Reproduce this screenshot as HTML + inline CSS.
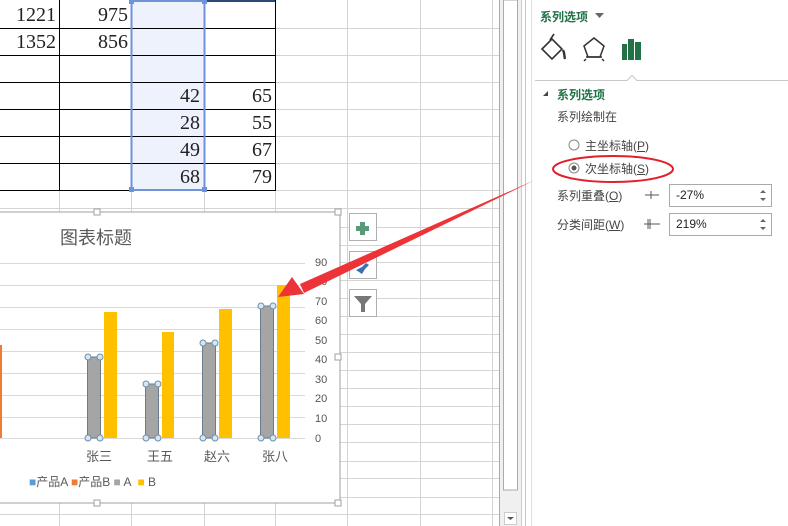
<!DOCTYPE html>
<html><head><meta charset="utf-8"><style>
*{margin:0;padding:0;box-sizing:border-box}
body{width:788px;height:526px;overflow:hidden;background:#fff;position:relative;font-family:"Liberation Sans","Noto Sans CJK SC",sans-serif}
.a{position:absolute}
.num{position:absolute;font-family:"Liberation Serif",serif;font-size:20px;color:#222;text-align:right}
.t{position:absolute;font-size:12px;color:#444;white-space:nowrap}
</style></head><body>
<svg class="a" style="left:0;top:0" width="788" height="526">
 <g stroke="#d4d4d4" stroke-width="1">
  <line x1="275.5" y1="0" x2="275.5" y2="526"/><line x1="347.5" y1="0" x2="347.5" y2="526"/>
  <line x1="420.5" y1="0" x2="420.5" y2="526"/><line x1="492.5" y1="0" x2="492.5" y2="526"/>
  <line x1="59.5" y1="190" x2="59.5" y2="526"/><line x1="131.5" y1="190" x2="131.5" y2="526"/><line x1="204.5" y1="190" x2="204.5" y2="526"/>
  <line x1="275" y1="28.5" x2="500" y2="28.5"/><line x1="275" y1="55.5" x2="500" y2="55.5"/><line x1="275" y1="82.5" x2="500" y2="82.5"/>
  <line x1="275" y1="109.5" x2="500" y2="109.5"/><line x1="275" y1="136.5" x2="500" y2="136.5"/><line x1="275" y1="163.5" x2="500" y2="163.5"/>
  <line x1="0" y1="190.5" x2="500" y2="190.5"/>
  <line x1="0" y1="208.5" x2="500" y2="208.5"/><line x1="340" y1="227.5" x2="500" y2="227.5"/><line x1="340" y1="245.5" x2="500" y2="245.5"/>
  <line x1="340" y1="262.5" x2="500" y2="262.5"/><line x1="340" y1="280.5" x2="500" y2="280.5"/><line x1="340" y1="298.5" x2="500" y2="298.5"/>
  <line x1="340" y1="316.5" x2="500" y2="316.5"/><line x1="340" y1="334.5" x2="500" y2="334.5"/><line x1="340" y1="352.5" x2="500" y2="352.5"/>
  <line x1="340" y1="370.5" x2="500" y2="370.5"/><line x1="340" y1="388.5" x2="500" y2="388.5"/><line x1="340" y1="406.5" x2="500" y2="406.5"/>
  <line x1="340" y1="424.5" x2="500" y2="424.5"/><line x1="340" y1="442.5" x2="500" y2="442.5"/><line x1="340" y1="461.5" x2="500" y2="461.5"/>
  <line x1="340" y1="478.5" x2="500" y2="478.5"/><line x1="340" y1="497.5" x2="500" y2="497.5"/><line x1="0" y1="514.5" x2="500" y2="514.5"/>
 </g>
 <rect x="131" y="0" width="73" height="190" fill="#eef2fc"/>
 <g stroke="#000" stroke-width="1">
  <line x1="0" y1="28.5" x2="275" y2="28.5"/><line x1="0" y1="55.5" x2="275" y2="55.5"/><line x1="0" y1="82.5" x2="275" y2="82.5"/>
  <line x1="0" y1="109.5" x2="275" y2="109.5"/><line x1="0" y1="136.5" x2="275" y2="136.5"/><line x1="0" y1="163.5" x2="275" y2="163.5"/>
  <line x1="0" y1="190.5" x2="275" y2="190.5"/>
  <line x1="59.5" y1="0" x2="59.5" y2="190"/><line x1="131.5" y1="0" x2="131.5" y2="190"/><line x1="275.5" y1="0" x2="275.5" y2="191"/>
 </g>
 <line x1="204" y1="1" x2="275" y2="1" stroke="#2a4a7a" stroke-width="2"/>
 <rect x="131.5" y="1" width="73" height="189" fill="none" stroke="#6f93d8" stroke-width="2"/>
 <g fill="#6f93d8"><rect x="129" y="-1" width="5" height="5"/><rect x="202" y="-1" width="5" height="5"/><rect x="129" y="187" width="5" height="5"/><rect x="202" y="187" width="5" height="5"/></g>
 <rect x="-2" y="212" width="342" height="291" fill="#fff" stroke="#a0a0a0"/>
 <g fill="#fff" stroke="#a0a0a0"><rect x="94" y="209" width="6" height="6"/><rect x="335" y="209" width="6" height="6"/><rect x="335" y="354" width="6" height="6"/><rect x="335" y="500" width="6" height="6"/><rect x="94" y="500" width="6" height="6"/></g>
 <g stroke="#d9d9d9"><line x1="0" y1="263.5" x2="305" y2="263.5"/><line x1="0" y1="285.5" x2="305" y2="285.5"/><line x1="0" y1="307.5" x2="305" y2="307.5"/><line x1="0" y1="329.5" x2="305" y2="329.5"/><line x1="0" y1="351.5" x2="305" y2="351.5"/><line x1="0" y1="373.5" x2="305" y2="373.5"/><line x1="0" y1="395.5" x2="305" y2="395.5"/><line x1="0" y1="417.5" x2="305" y2="417.5"/><line x1="0" y1="438.5" x2="305" y2="438.5"/></g>
 <rect x="0" y="345" width="2" height="93" fill="#ed7d31"/>
 <g fill="#ffc000"><rect x="104" y="312" width="13" height="126"/><rect x="162" y="332" width="12" height="106"/><rect x="219" y="309" width="13" height="129"/><rect x="277" y="285" width="13" height="153"/></g>
 <g fill="#a5a5a5" stroke="#6b7d8d"><rect x="87.5" y="357" width="13" height="81"/><rect x="145.5" y="384" width="13" height="54"/><rect x="202.5" y="343" width="13" height="95"/><rect x="260.5" y="306" width="13" height="132"/></g>
 <g fill="#d8e6f2" stroke="#6a8fae" stroke-width="1">
  <circle cx="88" cy="357" r="3"/><circle cx="100" cy="357" r="3"/><circle cx="88" cy="438" r="3"/><circle cx="100" cy="438" r="3"/>
  <circle cx="146" cy="384" r="3"/><circle cx="158" cy="384" r="3"/><circle cx="146" cy="438" r="3"/><circle cx="158" cy="438" r="3"/>
  <circle cx="203" cy="343" r="3"/><circle cx="215" cy="343" r="3"/><circle cx="203" cy="438" r="3"/><circle cx="215" cy="438" r="3"/>
  <circle cx="261" cy="306" r="3"/><circle cx="273" cy="306" r="3"/><circle cx="261" cy="438" r="3"/><circle cx="273" cy="438" r="3"/>
 </g>
 <g font-size="11" fill="#555" font-family="Liberation Sans,sans-serif">
  <text x="315" y="266">90</text><text x="315" y="285">80</text><text x="315" y="305">70</text><text x="315" y="324">60</text><text x="315" y="344">50</text><text x="315" y="363">40</text><text x="315" y="383">30</text><text x="315" y="402">20</text><text x="315" y="422">10</text><text x="315" y="442">0</text>
 </g>
 <g fill="#fff" stroke="#b0b0b0"><rect x="349.5" y="213.5" width="27" height="27"/><rect x="349.5" y="251.5" width="27" height="27"/><rect x="349.5" y="289.5" width="27" height="27"/></g>
 <path d="M360 222h5v4h4v5h-4v4h-5v-4h-4v-5h4z" fill="#5a9a78"/>
 <path d="M356 270l6-3 4-4 3 2-4 4-3 5z" fill="#3a6fb5"/>
 <path d="M354 296h18l-7 8v8h-4v-8z" fill="#777"/>
 <line x1="499.5" y1="0" x2="499.5" y2="526" stroke="#aaa"/>
 <rect x="500" y="0" width="22" height="526" fill="#f0f0f0"/>
 <rect x="503.5" y="0" width="14" height="490" fill="#fff" stroke="#aaa"/>
 <rect x="504.5" y="512.5" width="12" height="12" fill="#fff" stroke="#ccc"/>
 <path d="M507 517h7l-3.5 3z" fill="#555"/>
 <line x1="521.5" y1="0" x2="521.5" y2="526" stroke="#ccc"/>
 <rect x="525" y="0" width="263" height="526" fill="#fff"/>
 <line x1="525.5" y1="0" x2="525.5" y2="526" stroke="#c6c6c6"/>
 <line x1="531.5" y1="0" x2="531.5" y2="526" stroke="#e0e0e0"/>
 <path d="M535 80.5h92l5-5 5 5h151" fill="none" stroke="#c8c8c8"/>
 <path d="M595 13h9l-4.5 5z" fill="#666"/>
 <!-- fill icon -->
 <path d="M542 49l10-10 10 10-10 10z" fill="none" stroke="#333" stroke-width="1.6"/>
 <path d="M550 40l4-6" stroke="#333" stroke-width="1.6"/>
 <path d="M563 50c2 4 1 6 2 9" stroke="#333" stroke-width="2.4" fill="none"/>
 <!-- pentagon -->
 <path d="M584 46l10-8 10 8-4 11h-12z" fill="none" stroke="#333" stroke-width="1.5"/>
 <path d="M586 57h16M586 59l-2 2M602 59l2 2" stroke="#333" stroke-width="1.5"/>
 <!-- bars -->
 <g fill="#217346"><rect x="622" y="44" width="5" height="16"/><rect x="628" y="39" width="6" height="21"/><rect x="635" y="42" width="6" height="18"/></g>
 <path d="M543 96l5-5v5z" fill="#444"/>
 <circle cx="574" cy="145" r="5" fill="#fff" stroke="#888"/>
 <circle cx="574" cy="168" r="5" fill="#fff" stroke="#888"/>
 <circle cx="574" cy="168" r="2.5" fill="#555"/>
 <ellipse cx="613" cy="169" rx="60" ry="13" fill="none" stroke="#e0202a" stroke-width="2"/>
 <path d="M645 195h14M651 191v8" stroke="#555"/>
 <path d="M644 224h16M650 219v10M648 219v10" stroke="#555"/>
 <rect x="669.5" y="184.5" width="102" height="22" fill="#fff" stroke="#aaa"/>
 <rect x="669.5" y="213.5" width="102" height="22" fill="#fff" stroke="#aaa"/>
 <path d="M760 193l3-3 3 3zM760 198l3 3 3-3zM760 222l3-3 3 3zM760 227l3 3 3-3z" fill="#666"/>
 <!-- arrow -->
 <path d="M535 180L300 284l4 9z" fill="#ee3338"/>
 <path d="M278 297l14-20 12 17z" fill="#ee3338"/>
</svg>
<div class="num" style="left:0;top:4px;width:56px">1221</div>
<div class="num" style="left:60px;top:4px;width:68px">975</div>
<div class="num" style="left:0;top:31px;width:56px">1352</div>
<div class="num" style="left:60px;top:31px;width:68px">856</div>
<div class="num" style="left:131px;top:85px;width:69px">42</div><div class="num" style="left:204px;top:85px;width:68px">65</div>
<div class="num" style="left:131px;top:112px;width:69px">28</div><div class="num" style="left:204px;top:112px;width:68px">55</div>
<div class="num" style="left:131px;top:139px;width:69px">49</div><div class="num" style="left:204px;top:139px;width:68px">67</div>
<div class="num" style="left:131px;top:166px;width:69px">68</div><div class="num" style="left:204px;top:166px;width:68px">79</div>
<div class="t" style="left:60px;top:224px;font-size:18px;color:#595959">图表标题</div>
<div class="t" style="left:86px;top:446px;font-size:13px;color:#595959">张三</div>
<div class="t" style="left:147px;top:446px;font-size:13px;color:#595959">王五</div>
<div class="t" style="left:204px;top:446px;font-size:13px;color:#595959">赵六</div>
<div class="t" style="left:262px;top:446px;font-size:13px;color:#595959">张八</div>
<div class="t" style="left:29px;top:473px;font-size:12px;color:#595959"><span style="color:#5b9bd5">■</span>产品A <span style="color:#ed7d31">■</span>产品B <span style="color:#a5a5a5">■</span> A &nbsp;<span style="color:#ffc000">■</span> B</div>
<div class="t" style="left:540px;top:8px;font-size:12px;color:#217346;font-weight:bold">系列选项</div>
<div class="t" style="left:557px;top:86px;font-size:12px;color:#217346;font-weight:bold">系列选项</div>
<div class="t" style="left:557px;top:108px">系列绘制在</div>
<div class="t" style="left:585px;top:137px">主坐标轴(<u>P</u>)</div>
<div class="t" style="left:585px;top:160px">次坐标轴(<u>S</u>)</div>
<div class="t" style="left:557px;top:187px">系列重叠(<u>O</u>)</div>
<div class="t" style="left:557px;top:216px">分类间距(<u>W</u>)</div>
<div class="t" style="left:676px;top:188px;color:#222">-27%</div>
<div class="t" style="left:676px;top:217px;color:#222">219%</div>
</body></html>
